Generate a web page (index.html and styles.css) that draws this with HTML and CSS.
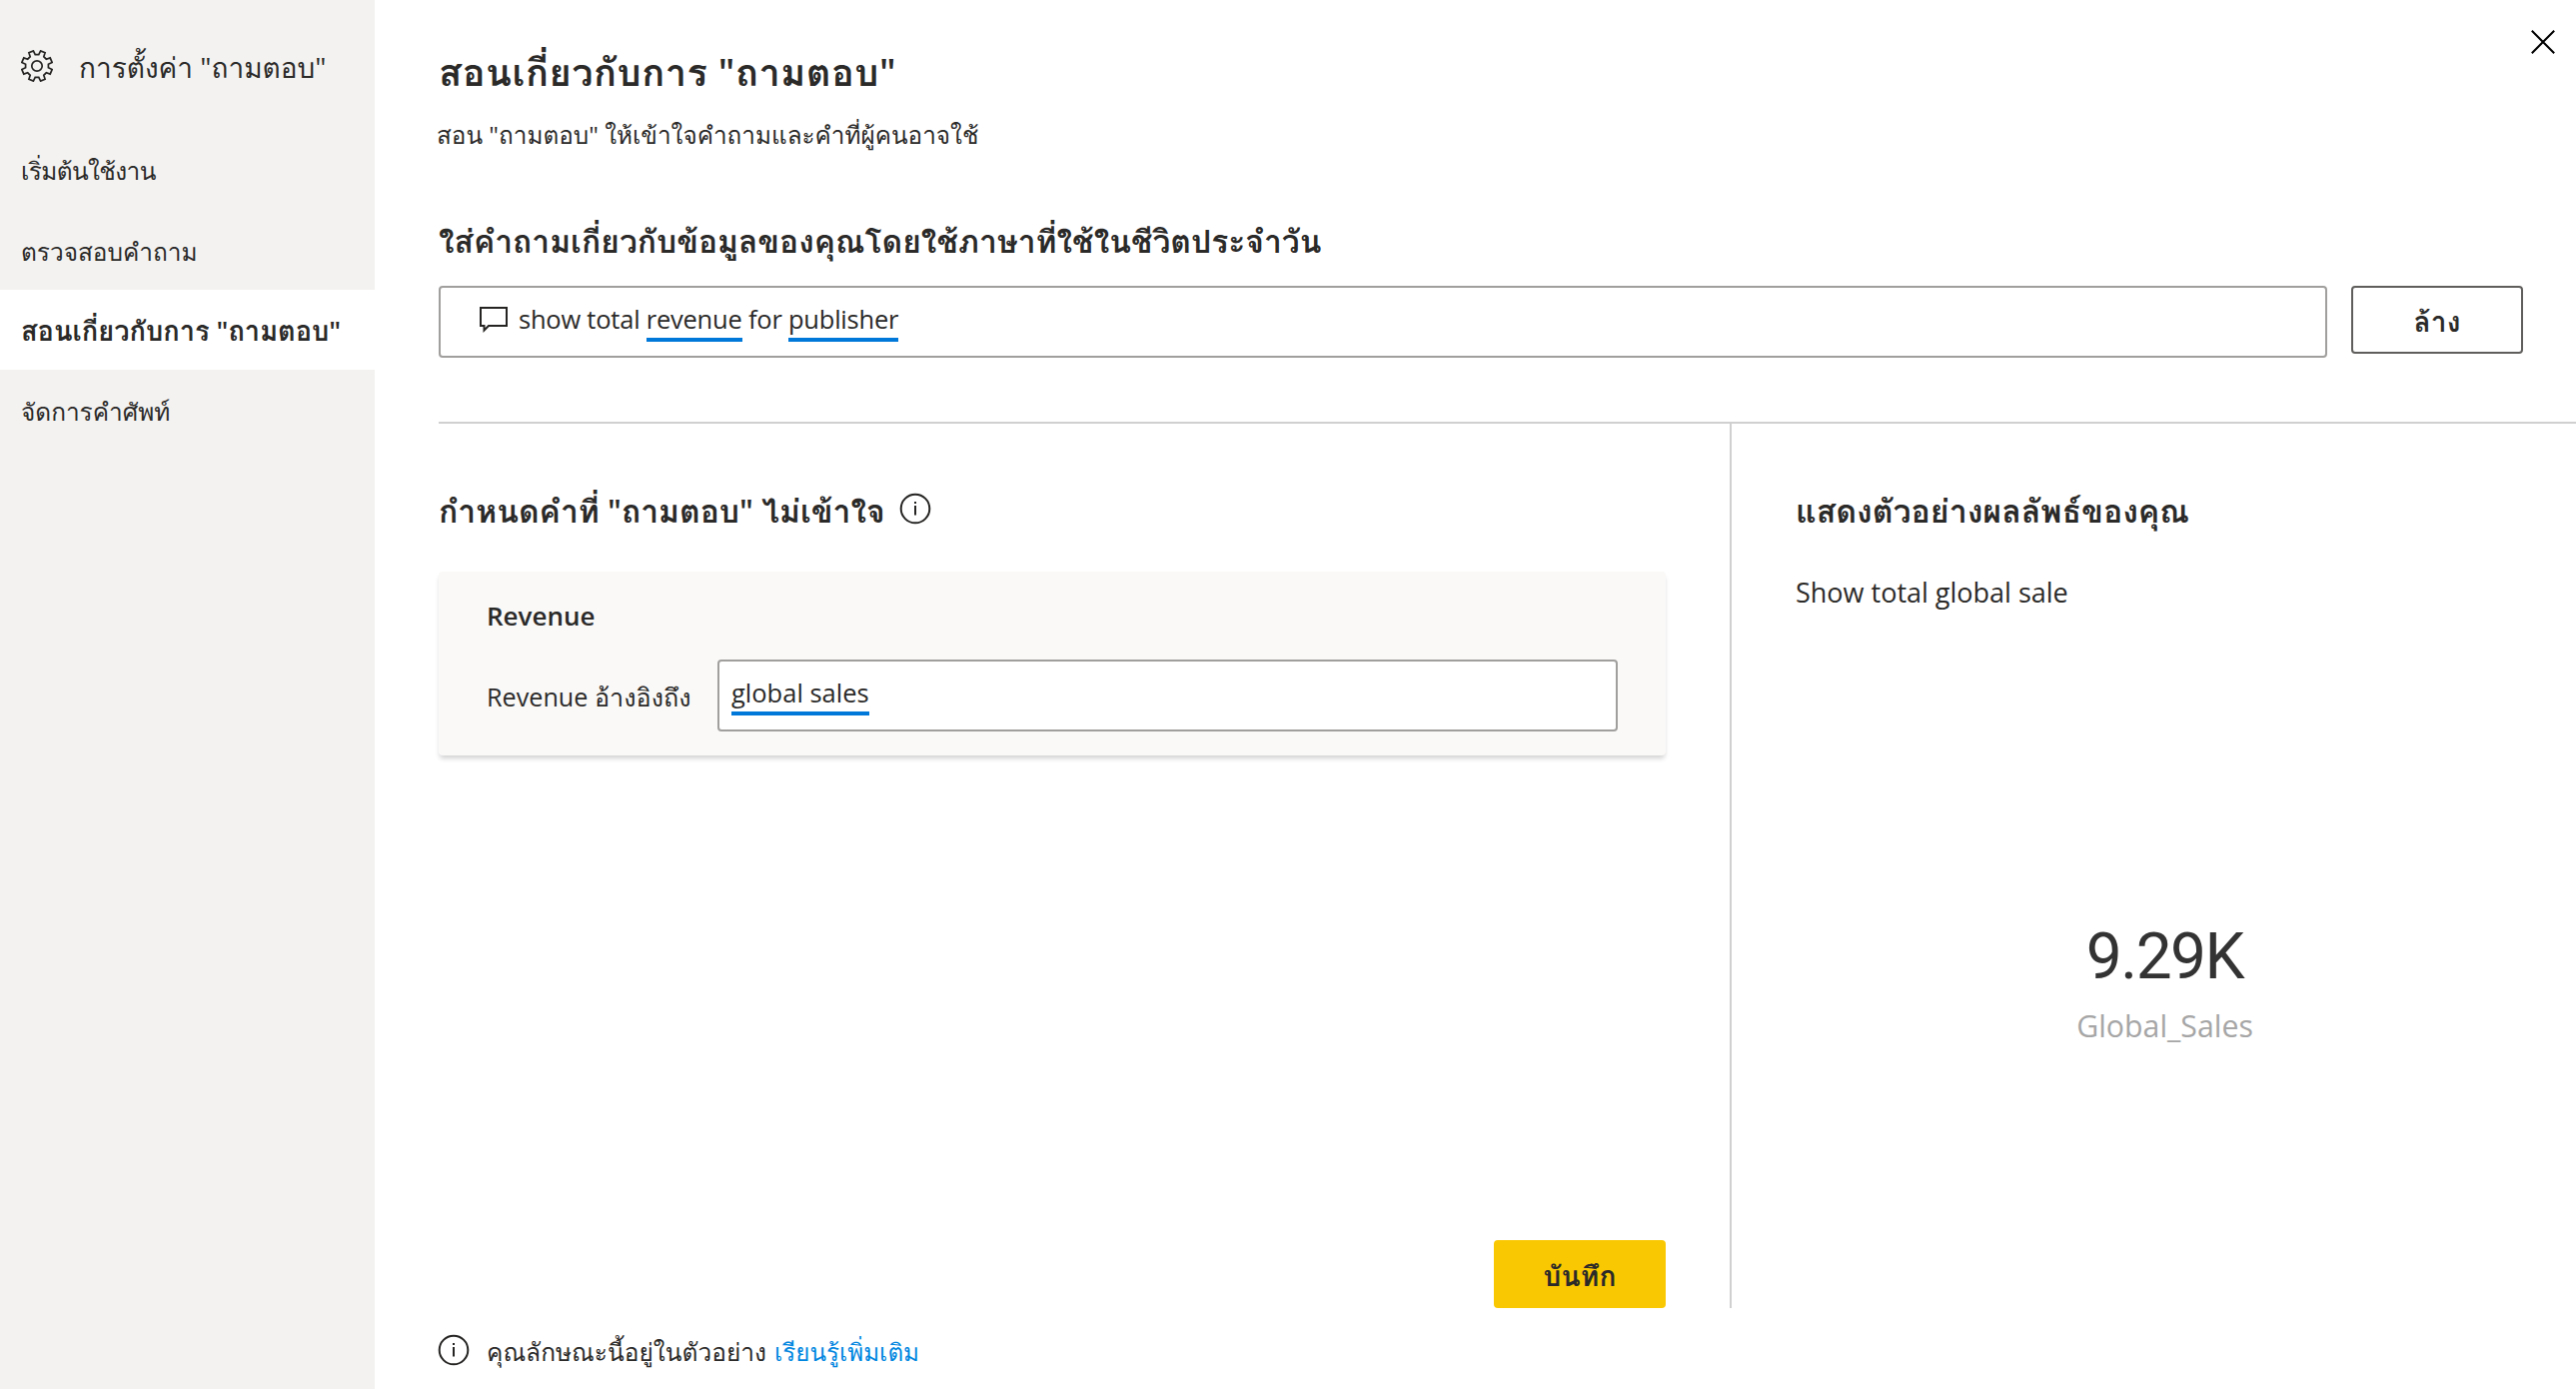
FILE: index.html
```
<!DOCTYPE html>
<html lang="th">
<head>
<meta charset="utf-8">
<title>การตั้งค่า "ถามตอบ"</title>
<link rel="stylesheet" href="styles.css">
</head>
<body>
<div class="app">
  <aside class="sidebar">
    <div class="brand">
      <svg class="gear" viewBox="-16 -16 32 32"><path d="M1.800-11.400 3.600-15.100 8.100-13.200 6.800-9.300 9.300-6.800 13.200-8.100 15.100-3.600 11.400-1.800V1.800L15.100 3.600 13.200 8.100 9.300 6.800 6.800 9.300 8.100 13.200 3.600 15.100 1.800 11.400H-1.800L-3.600 15.100-8.100 13.200-6.800 9.300-9.300 6.800-13.200 8.100-15.100 3.600-11.400 1.800V-1.800L-15.100-3.600-13.200-8.100-9.300-6.800-6.800-9.300-8.100-13.200-3.600-15.100-1.800-11.400Z"/><circle r="5.200"/></svg>
      <span class="brand-text">การตั้งค่า "ถามตอบ"</span>
    </div>
    <nav class="nav">
      <a class="nav-item start">เริ่มต้นใช้งาน</a>
      <a class="nav-item">ตรวจสอบคำถาม</a>
      <a class="nav-item active">สอนเกี่ยวกับการ "ถามตอบ"</a>
      <a class="nav-item">จัดการคำศัพท์</a>
    </nav>
  </aside>
  <main class="main">
    <header class="header">
      <div>
        <h1 class="title">สอนเกี่ยวกับการ "ถามตอบ"</h1>
        <p class="subtitle">สอน "ถามตอบ" ให้เข้าใจคำถามและคำที่ผู้คนอาจใช้</p>
      </div>
      <svg class="close" viewBox="0 0 24 24"><path d="M.8.800 23.200 23.200M23.200.8.800 23.200"/></svg>
    </header>
    <h2 class="prompt">ใส่คำถามเกี่ยวกับข้อมูลของคุณโดยใช้ภาษาที่ใช้ในชีวิตประจำวัน</h2>
    <div class="ask-row">
      <div class="field ask">
        <svg class="bubble" viewBox="0 0 28 26"><path d="M1 1H27V19H9L4.500 23.500V19H1Z"/></svg>
        <span class="question">show total <u>revenue</u> for <u>publisher</u></span>
      </div>
      <button class="btn clear">ล้าง</button>
    </div>
    <div class="panels">
      <section class="define">
        <h2 class="define-title">กำหนดคำที่ "ถามตอบ" ไม่เข้าใจ
          <svg class="info" viewBox="0 0 32 32"><circle cx="16" cy="16" r="14.300"/><path d="M16 13V22.500M16 9V11"/></svg>
        </h2>
        <div class="card">
          <p class="term">Revenue</p>
          <div class="refers-row">
            <label class="refers">Revenue อ้างอิงถึง</label>
            <div class="field meaning"><u>global sales</u></div>
          </div>
        </div>
        <button class="btn save">บันทึก</button>
      </section>
      <section class="preview">
        <h2 class="preview-title">แสดงตัวอย่างผลลัพธ์ของคุณ</h2>
        <p class="restated">Show total global sale</p>
        <div class="metric">
          <div class="value">9.29K</div>
          <div class="label">Global_Sales</div>
        </div>
      </section>
    </div>
    <footer class="footer">
      <svg class="info" viewBox="0 0 32 32"><circle cx="16" cy="16" r="14.300"/><path d="M16 13V22.500M16 9V11"/></svg>
      <span>คุณลักษณะนี้อยู่ในตัวอย่าง</span>
      <a class="link">เรียนรู้เพิ่มเติม</a>
    </footer>
  </main>
</div>
</body>
</html>
```
FILE: styles.css
```
* { box-sizing: border-box; }
body { margin: 0; background: #fff; color: #2b2a29; font-family: "Open Sans", Loma, sans-serif; }
h1, h2, p { margin: 0; font-weight: 600; white-space: nowrap; }
svg { fill: none; stroke: #252423; stroke-width: 2; flex: none; }
.app { display: flex; height: 1390px; overflow: hidden; }

.sidebar { width: 375px; background: #f3f2f1; flex: none; }
.brand { display: flex; align-items: center; height: 130px; padding: 2px 0 0 21px; gap: 26px; }
.gear { width: 32px; height: 32px; stroke-width: 1.700; }
.brand-text { padding-top: 2px; font-size: 28px; line-height: 40px; }
.nav-item { display: flex; align-items: center; height: 80px; padding: 3px 0 0 21px; font-size: 24.400px; line-height: 40px; }
.nav-item.start { padding-top: 2px; letter-spacing: -.6px; }
.nav-item.active { background: #fff; padding-top: 1px; font-size: 27.200px; font-weight: 600; }

.main { flex: 1; min-width: 0; padding: 30px 0 0 64px; display: flex; flex-direction: column; }
.header { display: flex; justify-content: space-between; padding-right: 21px; }
.title { margin-top: 11px; font-size: 38px; line-height: 60px; letter-spacing: .5px; }
.subtitle { margin: 14px 0 0 -2px; font-size: 24.300px; line-height: 40px; font-weight: 400; }
.close { width: 24px; height: 24px; stroke: #000; }
.prompt { margin-top: 64px; font-size: 31.800px; line-height: 44px; }
.ask-row { display: flex; gap: 24px; padding-right: 53px; margin-top: 23px; height: 72px; }
.field { border: 2px solid #a19f9d; border-radius: 4px; background: #fff; font-size: 25.500px; line-height: 34px; }
.field u { display: inline-block; height: 40px; text-decoration: none; border-bottom: 4px solid #0078d9; }
.ask { flex: 1; display: flex; padding: 14px 0 0 40px; letter-spacing: -.23px; }
.bubble { width: 28px; height: 26px; margin: 5px 11px 0 -1px; }
.btn { height: 68px; width: 172px; padding: 1px 0 0; border-radius: 4px; font: 600 28px/40px "Open Sans", Loma, sans-serif; letter-spacing: .2px; color: #2b2a29; }
.clear { border: 2px solid #605e5c; background: #fff; }

.panels { display: flex; height: 887px; margin-top: 64px; border-top: 2px solid #d0d0d0; }
.define { width: 1294px; padding: 65px 64px 0 0; border-right: 2px solid #d0d0d0; display: flex; flex-direction: column; }
.define-title { display: flex; align-items: center; gap: 14px; font-size: 31.850px; line-height: 44px; }
.info { width: 32px; height: 32px; }
.define-title .info { margin-bottom: 5px; }
.card { height: 184px; margin-top: 39px; padding: 26px 48px 0; background: #faf9f8; border-radius: 4px; box-shadow: 0 4px 5px -1px rgba(0, 0, 0, .18); }
.term { font-size: 26px; line-height: 36px; }
.refers-row { display: flex; align-items: center; justify-content: space-between; margin-top: 26px; height: 72px; }
.refers { padding-top: 1px; font-size: 25.200px; line-height: 36px; }
.meaning { width: 901px; height: 72px; padding: 14px 0 0 12px; }
.save { margin: auto 0 0 auto; border: 0; background: #fac802; }

.preview { flex: 1; padding: 65px 42px 0 64px; }
.preview-title { font-size: 32.100px; line-height: 44px; }
.restated { margin-top: 40px; font-size: 27px; line-height: 40px; font-weight: 400; }
.metric { margin-top: 307px; display: flex; flex-direction: column; align-items: center; }
.value { font: 64px/76px Roboto, sans-serif; letter-spacing: -1.500px; color: #333; }
.label { margin-top: 11px; font-size: 30.300px; line-height: 40px; color: #a6a6a6; }

.footer { display: flex; align-items: center; height: 40px; margin-top: 24px; font-size: 24.500px; line-height: 40px; }
.footer .info { margin: -5px 17px 0 -1px; }
.link { margin-left: 8px; font-size: 24.200px; color: #0086e0; }
```
